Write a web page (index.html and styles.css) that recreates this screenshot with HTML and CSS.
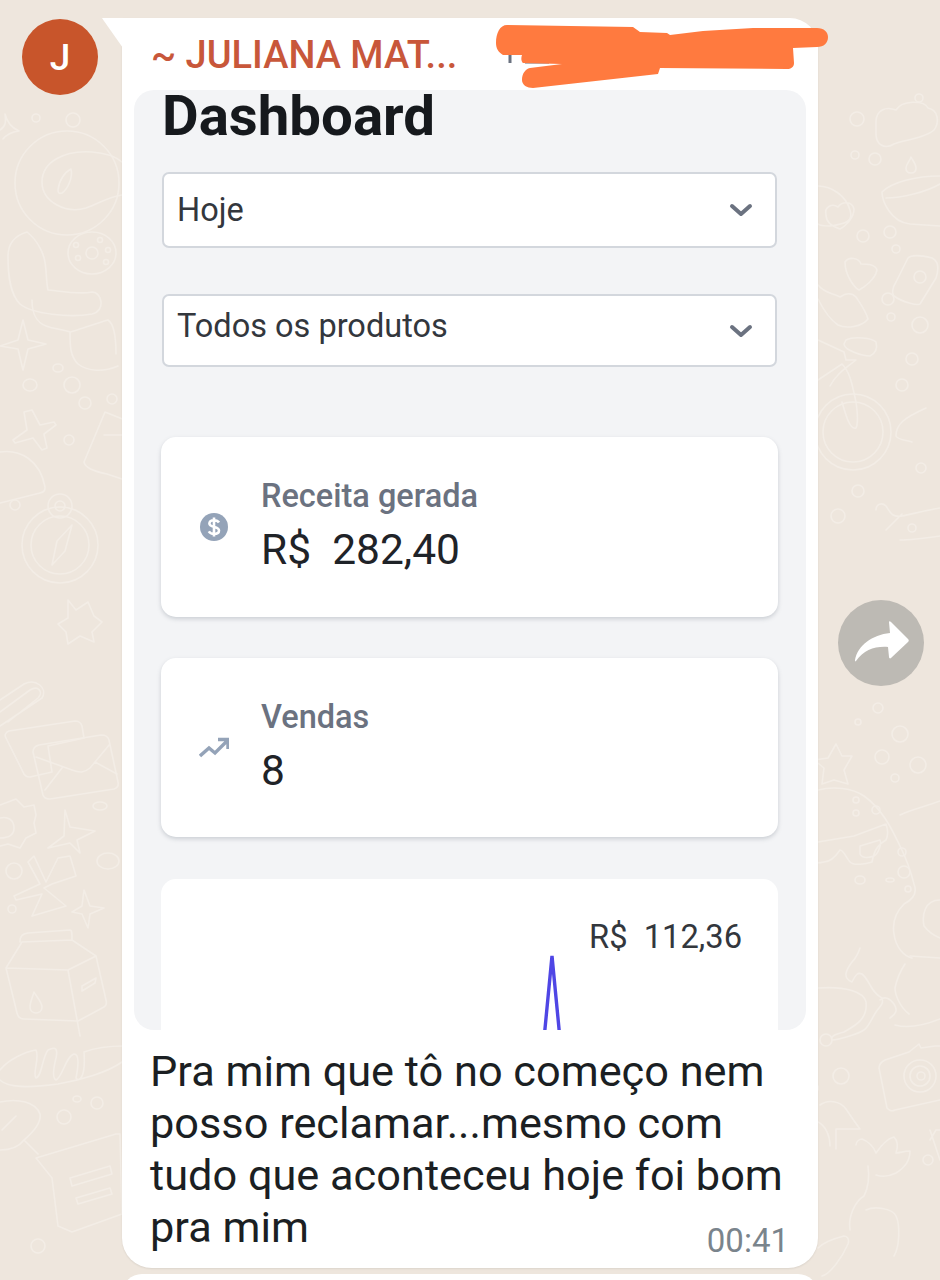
FILE: index.html
```html
<!DOCTYPE html>
<html lang="pt-BR">
<head>
    <meta charset="UTF-8">
    <meta name="viewport" content="width=device-width, initial-scale=1.0">
    <title>Conversa</title>
    <link rel="stylesheet" href="styles.css">
</head>
<body>
    <!-- Wallpaper doodles -->
    <svg class="wallpaper" viewBox="0 0 940 1280" width="940" height="1280">
        <g>
            <circle cx="67" cy="183" r="52"/>
            <path d="M42 182c0-20 22-32 50-30 14 1 24 5 30 10M122 195c-14 2-24 9-36 13-20 6-44-6-44-26"/>
            <path d="M58 190c1-10 7-18 13-21 2 8-3 20-9 24-3 1-4 0-4-3z"/>
            <circle cx="36" cy="118" r="4"/><circle cx="73" cy="120" r="7"/>
            <path d="M0 130c6-4 6-8 5-16 2 8 7 14 14 17-7 1-12 3-16 8"/>
            <path d="M27 232c-10 3-19 10-19 24 0 20 2 38 12 48 12 10 50 14 72 10 14-3 10-22 0-22-14 3-38-2-44-2-3-14 0-28-8-42-3-6-8-12-13-16z"/>
            <ellipse cx="92" cy="253" rx="24" ry="21"/><circle cx="92" cy="253" r="6"/>
            <circle cx="76" cy="245" r="2.5"/><circle cx="100" cy="240" r="2.5"/><circle cx="108" cy="250" r="2.5"/><circle cx="106" cy="262" r="2.5"/><circle cx="78" cy="258" r="2.5"/>
            <path d="M32 300c0 14 4 22 14 26 8 3 20 4 24 6 0 14 0 24 8 32 10 8 26 8 40 2M70 332c2 0 30-10 38-12 6 4 8 18 8 34"/>
            <path d="M23 320l5 20 18 4-18 5-5 21-5-21-18-3 18-6z"/>
            <ellipse cx="58" cy="368" rx="5" ry="4"/><ellipse cx="30" cy="385" rx="7" ry="6"/><circle cx="72" cy="385" r="8"/><circle cx="85" cy="403" r="6"/><circle cx="112" cy="399" r="5"/><circle cx="69" cy="440" r="5"/><circle cx="15" cy="505" r="5"/>
            <path d="M32 410l8 15 14-3 2 3-12 9 3 14-5 2-9-12-18 5-2-3 14-10-3-18z"/>
            <path d="M105 412l20 8v60l-18-6c-10-2-22-6-23-12zM104 435l21 0"/>
            <path d="M0 452c20-3 40 8 45 35 0 4-1 5-5 6l-40 10"/>
            <circle cx="60" cy="545" r="38"/><circle cx="60" cy="545" r="29"/><circle cx="60" cy="506" r="12"/><circle cx="60" cy="506" r="5"/>
            <path d="M72 525l-7 26-13 14 5-24z"/>
            <path d="M68 600l8 10 12-8 6 14 8 6-10 10 2 10-14-6-12 8-2-12-8-8 10-6z"/>
            <!-- clip and envelope -->
            <path d="M0 712l30-22c8-5 14 2 8 8L8 722M0 700l24-16c12-6 24 4 18 14L0 726"/>
            <path d="M6 738c-2-3 0-6 3-7l66-10c4 0 6 2 7 5l2 12-36 8 4 26-22 5c-4 0-6-2-7-5z"/>
            <path d="M33 752c0-4 2-6 6-7l62-10c4 0 7 1 8 5l9 42c1 4-1 6-4 7l-64 10c-3 0-6-1-7-4zM36 757l36 13c8 3 12 3 18-2l20-24M45 790l17-22M95 762l22 12"/>
            <path d="M0 805l16-6 8 8 10-2 2 10-2 8 2 10-10 5-6 10-12-4-8 2M0 818c8-2 14 2 14 10s-6 10-14 10"/>
            <path d="M65 810l5 17 25 4-18 9 3 13-10-10-22 5 16-12z"/>
            <ellipse cx="100" cy="806" rx="7" ry="4"/><ellipse cx="108" cy="861" rx="11" ry="8"/><circle cx="14" cy="871" r="8"/><circle cx="12" cy="909" r="4"/>
            <path d="M34 856l12 26 12-24 12-2 6 20-24 8-8 4 22 18-34 10 10-22-26 6-2-4 26-12-12-22z"/>
            <path d="M84 890l6 16 14 2-14 6-2 14-6-14-10-2 10-6z"/>
            <!-- milk box -->
            <path d="M20 942c0-6 2-8 8-9l42-3c2 0 2 3 2 10M6 968l16-26 50-2 24 16 10 44c1 4 0 6-2 7l-26 14-54-2c-4 0-6-2-7-6zM6 968l62 2 12 66M68 970l28-14M82 986l14-8-1 5-13 8z"/>
            <path d="M34 992c2 4 8 10 8 15 0 4-3 6-6 6s-6-2-6-6c0-5 3-11 4-15z"/>
            <path d="M0 1070c8-10 24-18 36-20 4 8-4 24 0 28 6-2 6-20 12-28 8-4 10-1 8 8-2 8-4 20 0 22 6-2 10-24 18-26 6 0 4 14 2 24 2 4 10 2 8-26 16-6 30-6 40-6M122 1062c-14 10-40 18-64 22-30 4-50 4-58-4"/>
            <ellipse cx="77" cy="1099" rx="4" ry="3"/><circle cx="97" cy="1103" r="6"/><circle cx="64" cy="1117" r="7"/><circle cx="38" cy="1246" r="7"/>
            <path d="M0 1102c18-4 36 0 40 12 2 12-14 24-16 26l14 14M0 1150c10 0 18-2 24-10M2 1130l14-14"/>
            <path d="M36 1158l80-24 4 0 2 80-50 18-14-6-6-48z"/>
            <path d="M70 1178l40-12 2 8-40 12zM76 1198l34-10 2 6-34 10z"/>
            <!-- right strip -->
            <circle cx="857" cy="119" r="7"/><circle cx="919" cy="98" r="4"/><circle cx="855" cy="155" r="4"/><circle cx="875" cy="159" r="6"/>
            <path d="M876 122c0-12 10-16 20-12 6-10 28-10 32-2 10 2 12 14 6 22-8 8-30 10-40 14-10 6-18 0-18-10z"/>
            <path d="M911 157c2 4 5 7 5 11 0 3-2 5-5 5s-5-2-5-5c0-4 4-7 5-11z"/>
            <path d="M882 192c10-10 34-16 58-16M882 192c0 8 8 30 28 32l30 2M886 198c16 0 40-6 54-14"/>
            <path d="M818 186c14 0 28 10 32 24 4 12-6 14-20 16-6 0-10 0-12-2M826 215c-2-8 6-12 12-8 4-6 14-6 16 2 0 10-10 18-14 20-6-2-14-6-14-14z"/>
            <circle cx="863" cy="236" r="6"/><circle cx="890" cy="232" r="6"/><circle cx="896" cy="249" r="4"/><circle cx="888" cy="299" r="6"/><circle cx="891" cy="317" r="4"/><circle cx="920" cy="325" r="8"/><circle cx="912" cy="359" r="6"/><circle cx="902" cy="385" r="6"/><circle cx="921" cy="468" r="5"/><circle cx="858" cy="491" r="6"/><circle cx="838" cy="516" r="7"/>
            <path d="M845 262c4-6 14-4 16 2 6 0 14 0 16 6-2 10-14 18-18 20-4-2-14-14-14-28z"/>
            <path d="M818 285c6 8 14 8 22 12 6-4 12-4 16 0 4 6 10 14 12 22-6 8-22 10-30 6-6-4-14-14-20-26"/>
            <path d="M908 258c4-4 16-2 24 0 8 4 6 14 4 20l-16 26c-2 2-18-2-26-8-2-2-2-8 2-14z"/><circle cx="920" cy="277" r="6"/>
            <path d="M818 340l26 12 2 8 10 0c-10 8-20 14-26 26M818 380l24-16c8 8 10 20 14 38 2 14 2 22 0 26-6 2-10-12-14-26M846 340c8-4 26-2 30 2 2 8-2 12-6 14-8 0-26-6-26-12z"/>
            <circle cx="853" cy="432" r="38"/><circle cx="853" cy="432" r="30"/>
            <path d="M912 442c-6-2-14-2-16-6 0-12 8-18 30-28"/>
            <path d="M876 510c0-6 6-8 10-4 4 6 6 12 16 10 10-2 26-6 38-8M886 530l16-16M900 540c10 0 26-2 40-4"/>
            <circle cx="912" cy="528" r="4"/>
            <!-- star, glasses, etc -->
            <path d="M836 744l6 12h10l-8 14 4 14-14-4-12 4 2-16-10-8 14-2z"/>
            <circle cx="878" cy="708" r="5"/><circle cx="858" cy="722" r="3"/><circle cx="900" cy="734" r="8"/><circle cx="882" cy="757" r="7"/><circle cx="918" cy="765" r="8"/><circle cx="895" cy="778" r="4"/><circle cx="856" cy="800" r="3"/><circle cx="876" cy="810" r="4"/><circle cx="856" cy="813" r="3"/><circle cx="902" cy="852" r="4"/><circle cx="904" cy="872" r="6"/><ellipse cx="860" cy="880" rx="5" ry="4"/><ellipse cx="890" cy="880" rx="4" ry="2"/><circle cx="908" cy="889" r="3"/>
            <path d="M818 790c16-4 34-2 46 6 20 14 30 38 36 50s12 30 14 38c4 10-2 16-10 20-8 8-12 18-10 30 2 14 10 22 18 24M900 815c12-6 24-8 40-14"/>
            <path d="M818 842l36-6 32-12c2 6 2 12 0 16-10 6-12 12-14 22-6 2-18 4-22 0-4-4-6-12-10-12-4 6-10 12-16 12-8 2-14 0-16 0M860 846l20-6c2 4-2 14-6 16-6 2-12 2-14-2z"/>
            <path d="M940 900c-16 0-18 16-16 26 6 8 16 12 16 12M905 964c-4 6-8 14-10 24 0 8 6 20 14 26M940 958l-30-2"/>
            <path d="M860 948c-2 6-4 10-8 14-6 8-10 16 0 20 4-8 6-10 10-8 8 6 8 18 20 24 2 6-2 8-6 14-4 6-8 16-12 18-6 4-26 10-32 10-2-4 4-6 12-8 10-6 24-12 22-30-2-10-20-16-48-14M880 1000c4-4 10-2 14 4 4 6 2 10-4 14M895 1025c14 4 30 0 45-6"/>
            <circle cx="826" cy="1040" r="6"/><circle cx="841" cy="1076" r="8"/><circle cx="928" cy="1160" r="5"/>
            <path d="M885 1060l24-8 10-8 2 4 14-2 5 0M885 1060c-4 2-6 4-6 8l8 40c2 2 4 4 8 2l45-10"/>
            <circle cx="920" cy="1076" r="16"/><circle cx="920" cy="1076" r="10"/><circle cx="921" cy="1076" r="4"/>
            <path d="M820 1105c8-6 20-4 26 4 0 0 8 12 14 20h-24v20M818 1122c8 4 12 14 12 24M818 1090v-4"/>
            <path d="M856 1145c0-4 4-6 6-6 6 2 12 8 14 14 4-6 10-14 18-16 4 4 4 10 2 16 4 0 8-2 14-2 0 8-4 16-14 22-8 4-14 4-20 2M868 1166c2 14 0 22-4 30-10 6-16 22-14 34M866 1210c8-4 26-2 30 6 4 8 4 30-2 40"/>
            <path d="M818 1248c6-6 18-10 26-12 2 0 6 2 4 8-6 14-18 30-26 32"/>
            <path d="M930 1140l6-10 4 0M930 1130l10 30"/>
        </g>
    </svg>

    <div class="chat">
        <div class="msg-row">
            <div class="avatar">J</div>
            <div class="bubble">
                <div class="sender">~ JULIANA MAT...</div>
                <div class="shot">
                    <div class="shot-title">Dashboard</div>
                    <div class="select select-first">
                        <span>Hoje</span>
                        <svg class="chevron" viewBox="0 0 24 14" width="24" height="14"><path d="M3 3l9 8 9-8"/></svg>
                    </div>
                    <div class="select select-second">
                        <span class="select-text-up">Todos os produtos</span>
                        <svg class="chevron" viewBox="0 0 24 14" width="24" height="14"><path d="M3 3l9 8 9-8"/></svg>
                    </div>
                    <div class="stat-card stat-first">
                        <svg class="stat-icon" viewBox="0 0 30 30" width="30" height="30">
                            <circle class="icon-fill" cx="15" cy="15" r="14"/>
                            <path class="icon-dollar" d="M20 10.5c-1-1.7-3-2.3-5-2.3-2.6 0-4.6 1.2-4.6 3.4 0 4.6 9.6 2.2 9.6 6.9 0 2.200-2.200 3.400-5 3.400-2.200 0-4.200-.8-5.200-2.500M15 5.500v19"/>
                        </svg>
                        <div class="stat-text">
                            <div class="stat-label">Receita gerada</div>
                            <div class="stat-value">R$&nbsp; 282,40</div>
                        </div>
                    </div>
                    <div class="stat-card">
                        <svg class="stat-icon" viewBox="0 0 30 30" width="30" height="30">
                            <path class="icon-line" d="M1 23l9-8 6 5 12-12M19 6.500h10v9.500"/>
                        </svg>
                        <div class="stat-text">
                            <div class="stat-label">Vendas</div>
                            <div class="stat-value">8</div>
                        </div>
                    </div>
                    <div class="chart-card">
                        <div class="chart-value">R$&nbsp; 112,36</div>
                        <svg class="chart-line" viewBox="0 0 617 75" width="617" height="75"><path d="M383 84L391 1l8 83"/></svg>
                    </div>
                </div>
                <div class="msg-text">
                    <p>Pra mim que tô no começo nem posso reclamar...mesmo com tudo que aconteceu hoje foi bom</p>
                    <div class="msg-last">
                        <span>pra mim</span>
                        <span class="msg-time">00:41</span>
                    </div>
                </div>
            </div>
        </div>
        <div class="bubble-next"></div>
    </div>

    <!-- Reply arrow -->
    <div class="forward-btn">
        <svg viewBox="0 0 86 86" width="86" height="86"><path d="M17 60c3-15 17-25 35-27l-1-11c0-1 1-1 2 0l17 17c1 1 1 2 0 3L53 58c-1 1-2 0-2-1l-1-10c-13-1-24 3-32 14-1 1-1 0-1-1z"/></svg>
    </div>

    <!-- Scribble over the phone number -->
    <svg class="scribble" viewBox="0 0 940 100" width="940" height="100">
        <path class="scribble-under" d="M510 55v8M525 62h24"/>
        <path class="scribble-ink" d="M496 43c0-10 4-18 11-18l126 2 7 5 27 1 3 2 33-4 50-3h64c7 0 11 4 11 9 0 6-4 10-11 10l-24 1 1 15c0 4-3 6-7 6l-127-1-2 6-125 14c-6 0-11-3-11-8 0-6 3-11 8-12l32-4-39-1c-2-2-2-5-1-8h-19c-5-3-7-7-7-12z"/>
    </svg>
</body>
</html>
```
FILE: styles.css
```css
* {
    box-sizing: border-box;
}
html, body {
    height: 1280px;
    overflow: hidden;
}
body {
    font-family: Roboto, "Liberation Sans", sans-serif;
    position: relative;
    margin: 0;
    background-color: #eee6dd;
    color: #1f2328;
}
.wallpaper {
    position: absolute;
    top: 0;
    left: 0;
    fill: none;
    stroke: #f3ede6;
    stroke-width: 1.6;
    stroke-linecap: round;
    stroke-linejoin: round;
}
.chat {
    position: relative;
    display: flex;
    flex-direction: column;
    gap: 6px;
    padding-top: 18px;
}
.msg-row {
    display: flex;
    gap: 24px;
    padding-left: 22px;
}
.avatar {
    display: flex;
    justify-content: center;
    align-items: center;
    width: 76px;
    height: 76px;
    margin-top: 1px;
    border-radius: 50%;
    background-color: #c8552b;
    color: white;
    font-size: 37px;
    font-weight: 500;
}
/* Bubble */
.bubble {
    position: relative;
    width: 696px;
    height: 1250px;
    padding: 0 12px;
    background: white;
    border-radius: 0 28px 30px 30px;
    box-shadow: 0 1px 2px rgba(0, 0, 0, 0.08);
}
.bubble::before {
    content: "";
    position: absolute;
    top: 0;
    left: -20px;
    width: 21px;
    height: 30px;
    background: white;
    clip-path: polygon(0 0, 100% 0, 100% 100%, 2px 3px);
}
.sender {
    height: 72px;
    padding: 15px 0 0 17px;
    color: #c8573a;
    font-size: 38px;
    line-height: 44px;
    font-weight: 500;
}
/* Screenshot inside the bubble */
.shot {
    height: 940px;
    padding: 0 28px 0 27px;
    background-color: #f3f4f6;
    border-radius: 20px;
}
.shot-title {
    margin-left: 1px;
    color: #16191d;
    font-size: 56.4px;
    line-height: 52px;
    font-weight: 700;
}
.select {
    display: flex;
    justify-content: space-between;
    align-items: center;
    margin: 0 1px;
    padding: 0 22px 0 13px;
    background: white;
    border: 2px solid #d3d7dd;
    border-radius: 7px;
    color: #33373d;
    font-size: 32.5px;
}
.select-first {
    height: 76px;
    margin-top: 30px;
}
.select-second {
    height: 73px;
    margin-top: 46px;
}
.select-text-up {
    margin-top: -10px;
}
.chevron {
    fill: none;
    stroke: #6b7280;
    stroke-width: 4;
    stroke-linecap: round;
    stroke-linejoin: round;
}
.stat-card {
    display: flex;
    align-items: center;
    gap: 32px;
    height: 179px;
    margin-top: 41px;
    padding-left: 38px;
    background: white;
    border-radius: 15px;
    box-shadow: 0 2px 4px rgba(100, 110, 125, 0.28);
}
.stat-first {
    height: 180px;
    margin-top: 70px;
}
.stat-text {
    margin-bottom: 4px;
}
.icon-fill {
    fill: #94a3b8;
}
.icon-dollar {
    fill: none;
    stroke: white;
    stroke-width: 2.6;
}
.icon-line {
    fill: none;
    stroke: #94a3b8;
    stroke-width: 3.4;
}
.stat-label {
    color: #6b7280;
    font-size: 32.5px;
    line-height: 36px;
    font-weight: 500;
}
.stat-value {
    margin-top: 14px;
    color: #1f2328;
    font-size: 42.5px;
    line-height: 44px;
}
.chart-card {
    height: 151px;
    margin-top: 42px;
    padding-top: 40px;
    overflow: hidden;
    background: white;
    border-radius: 15px 15px 0 0;
}
.chart-value {
    padding-right: 36px;
    color: #33373d;
    font-size: 32.7px;
    line-height: 36px;
    text-align: right;
}
.chart-line {
    display: block;
    fill: none;
    stroke: #4f46e5;
    stroke-width: 3.4;
}
.msg-text {
    width: 640px;
    margin: 16px 0 0 16px;
    color: #1b1f23;
    font-size: 43.3px;
    line-height: 52px;
}
.msg-text p {
    margin: 0;
}
.msg-last {
    display: flex;
    justify-content: space-between;
    align-items: flex-end;
}
.msg-time {
    margin: 0 1px -13px 0;
    color: #7a848c;
    font-size: 33px;
    line-height: 52px;
}
.bubble-next {
    width: 696px;
    height: 40px;
    margin-left: 122px;
    background: white;
    border-radius: 24px;
}
.forward-btn {
    position: absolute;
    top: 600px;
    left: 838px;
    width: 86px;
    height: 86px;
    border-radius: 50%;
    background-color: rgba(150, 150, 145, 0.55);
}
.forward-btn svg {
    display: block;
    fill: white;
}
.scribble {
    position: absolute;
    top: 0;
    left: 0;
}
.scribble-ink {
    fill: #ff7a3f;
}
.scribble-under {
    fill: none;
    stroke: #6b7280;
    stroke-width: 3;
}
```
